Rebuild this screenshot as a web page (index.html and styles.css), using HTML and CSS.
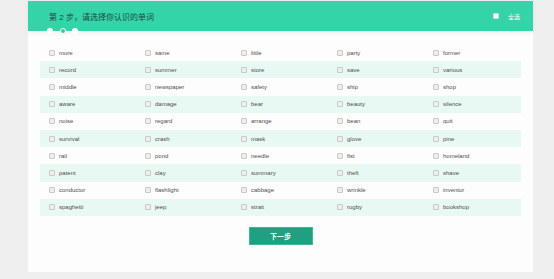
FILE: index.html
```html
<!DOCTYPE html>
<html lang="zh">
<head>
    <meta charset="UTF-8">
    <title>选择你认识的单词</title>
    <link rel="stylesheet" href="styles.css">
</head>
<body>
    <div class="card">
        <div class="header">
            <h1>第 2 步，请选择你认识的单词</h1>
            <label class="select-all"><span class="box"></span>全选</label>
            <div class="steps">
                <span class="dot"></span>
                <span class="dot active"></span>
                <span class="dot"></span>
            </div>
        </div>

        <div class="words" id="words"></div>

        <div class="actions">
            <button type="button" class="button">下一步</button>
        </div>
    </div>

    <script>
        const words = [
            "more", "same", "little", "party", "former",
            "record", "summer", "store", "save", "various",
            "middle", "newspaper", "safety", "ship", "shop",
            "aware", "damage", "bear", "beauty", "silence",
            "noise", "regard", "arrange", "bean", "quit",
            "survival", "crash", "mask", "glove", "pine",
            "rail", "pond", "needle", "fist", "homeland",
            "patent", "clay", "summary", "theft", "shave",
            "conductor", "flashlight", "cabbage", "wrinkle", "inventor",
            "spaghetti", "jeep", "strait", "rugby", "bookshop"
        ];

        const list = document.getElementById("words");
        for (let i = 0; i < words.length; i += 5) {
            const row = document.createElement("div");
            row.className = "row";
            words.slice(i, i + 5).forEach(word => {
                const item = document.createElement("label");
                item.className = "word";
                item.innerHTML = `<span class="box"></span>${word}`;
                row.appendChild(item);
            });
            list.appendChild(row);
        }
    </script>
</body>
</html>
```

FILE: styles.css
```css
body {
    margin: 0;
    background-color: #efefef;
    font-family: 'Liberation Sans', Arial, 'Noto Sans CJK SC', sans-serif;
}
.card {
    width: 505px;
    height: 271px;
    margin: 1px 0 0 28px;
    background-color: #fdfdfd;
}
.header {
    position: relative;
    height: 30px;
    padding: 0 13px 0 21px;
    background-color: #34d3a8;
    display: flex;
    align-items: center;
    justify-content: space-between;
    box-shadow: 0 2px 5px rgba(0, 0, 0, 0.06);
}
h1 {
    margin: 1px 0 0;
    font-size: 8px;
    font-weight: normal;
    color: #1f4a3e;
}
.select-all {
    display: flex;
    align-items: center;
    gap: 5px;
    font-size: 6px;
    color: #ffffff;
}
.select-all .box {
    background-color: #f4f4f4;
    border-color: #d8d8d8;
}
.steps {
    position: absolute;
    left: 19px;
    bottom: -3px;
    display: flex;
    gap: 6.5px;
}
.dot {
    width: 6px;
    height: 6px;
    border-radius: 50%;
    background-color: #ffffff;
    box-sizing: border-box;
}
.dot.active {
    background-color: #34c9a0;
    border: 1.5px solid #ffffff;
}
.words {
    margin: 13px 12px 0;
}
.row {
    display: grid;
    grid-template-columns: repeat(5, 96px);
    height: 17.2px;
    align-items: center;
}
.row:nth-child(even) {
    background-color: #e8f8f2;
}
.word {
    display: flex;
    align-items: center;
    padding-left: 9px;
    font-size: 6px;
    color: #4f4f4f;
}
.box {
    display: inline-block;
    width: 6px;
    height: 6px;
    box-sizing: border-box;
    margin-right: 4px;
    border: 1px solid #c9c9c9;
    border-radius: 1px;
    background-color: #eeeeee;
}
.actions {
    display: flex;
    justify-content: center;
    margin-top: 11px;
}
.button {
    width: 64px;
    height: 18px;
    padding: 0;
    border: 1px solid #3cb896;
    background-color: #20a080;
    color: #ffffff;
    font-family: inherit;
    font-size: 7px;
    font-weight: bold;
    cursor: pointer;
}
```
